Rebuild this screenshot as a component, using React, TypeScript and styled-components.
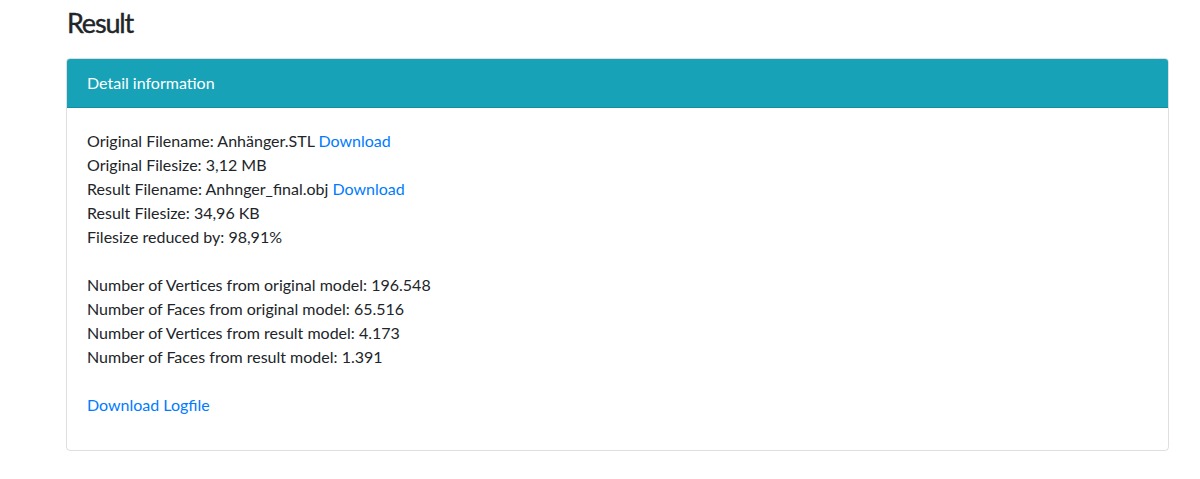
import React from 'react';
import styled, { createGlobalStyle } from 'styled-components';

const GlobalStyle = createGlobalStyle`
    body {
        margin: 0;
        background: #fff;
        font-family: "Segoe UI", Lato, "Noto Sans", "Liberation Sans", sans-serif;
        font-size: 16px;
        line-height: 1.5;
        color: #212529;
    }
`;

const details = [
    { label: 'Original Filename', value: 'Anhänger.STL', link: true },
    { label: 'Original Filesize', value: '3,12 MB' },
    { label: 'Result Filename', value: 'Anhnger_final.obj', link: true },
    { label: 'Result Filesize', value: '34,96 KB' },
    { label: 'Filesize reduced by', value: '98,91%' },
];

const counts = [
    { label: 'Number of Vertices from original model', value: '196.548' },
    { label: 'Number of Faces from original model', value: '65.516' },
    { label: 'Number of Vertices from result model', value: '4.173' },
    { label: 'Number of Faces from result model', value: '1.391' },
];

const App: React.FC = () => (
    <Page>
        <GlobalStyle />
        <Title>Result</Title>
        <Card>
            <CardHeader>Detail information</CardHeader>
            <CardBody>
                <Block>
                    {details.map(d => (
                        <Line key={d.label}>
                            {d.label}: {d.value}
                            {d.link && (
                                <>
                                    {' '}
                                    <Link href="#">Download</Link>
                                </>
                            )}
                        </Line>
                    ))}
                </Block>
                <Block>
                    {counts.map(c => (
                        <Line key={c.label}>
                            {c.label}: {c.value}
                        </Line>
                    ))}
                </Block>
                <Block>
                    <Link href="#">Download Logfile</Link>
                </Block>
            </CardBody>
        </Card>
    </Page>
);

export default App;

const Page = styled.div`
    padding: 6px 31px 28px 66px;
`;

const Title = styled.h3`
    margin: 0 0 18px 1px;
    font-size: 27px;
    font-weight: 400;
    line-height: 1.25;
    letter-spacing: -1.2px;
    -webkit-text-stroke: 0.4px #212529;
`;

const Card = styled.div`
    border: 1px solid rgba(0, 0, 0, 0.125);
    border-radius: 4px;
    overflow: hidden;
`;

const CardHeader = styled.div`
    background-color: #17a2b8;
    color: #fff;
    padding: 12px 20px;
    border-bottom: 1px solid rgba(0, 0, 0, 0.125);
`;

const CardBody = styled.div`
    padding: 21px 20px 17px;
`;

const Block = styled.div`
    margin-bottom: 24px;

    &:last-child {
        margin-bottom: 16px;
    }
`;

const Line = styled.div``;

const Link = styled.a`
    color: #007bff;
    text-decoration: none;
`;
